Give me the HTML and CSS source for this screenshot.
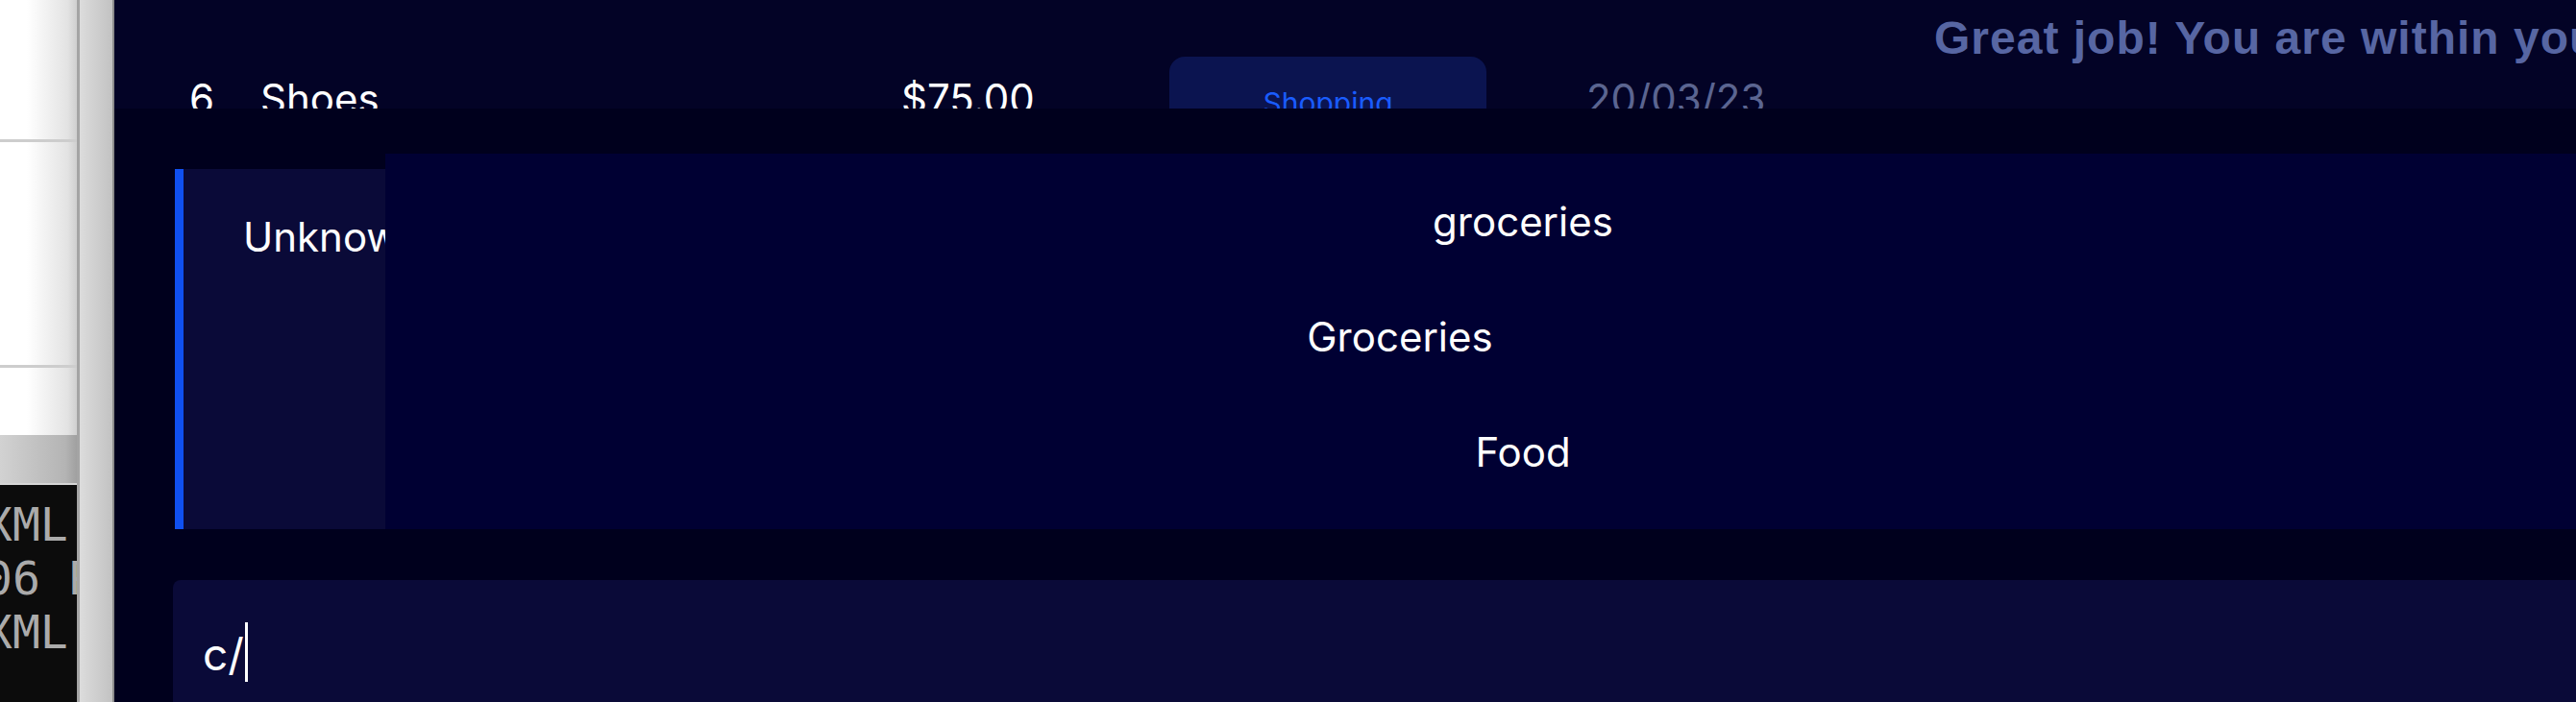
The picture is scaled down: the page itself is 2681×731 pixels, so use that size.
FILE: index.html
```html
<!DOCTYPE html>
<html lang="en">
<head>
    <meta charset="UTF-8">
    <meta name="viewport" content="width=device-width, initial-scale=1.0">
    <title>Expenses - Command</title>
    <link rel="stylesheet" href="styles.css">
</head>
<body>
    <div class="desktop">
        <aside class="side">
            <div class="side-list">
                <div class="side-row side-row-top"></div>
                <div class="side-row side-row-mid"></div>
                <div class="side-row side-row-end"></div>
            </div>
            <div class="side-bar"></div>
            <div class="term">
                <div class="term-line">XML</div>
                <div class="term-line">06 P</div>
                <div class="term-line">XML</div>
            </div>
        </aside>

        <div class="divider"></div>

        <main class="app">
            <div class="top">
                <div class="expense-row">
                    <span class="cell-id">6</span>
                    <span class="cell-name">Shoes</span>
                    <span class="cell-amount">$75.00</span>
                    <span class="cell-cat"><span class="badge">Shopping</span></span>
                    <span class="cell-date">20/03/23</span>
                </div>
                <p class="notice">Great job! You are within your budget.</p>
            </div>

            <div class="palette">
                <div class="results">
                    <div class="preview">
                        <span class="preview-name">Unknown</span>
                    </div>
                    <ul class="options">
                        <li class="option">groceries</li>
                        <li class="option option-shift">Groceries</li>
                        <li class="option">Food</li>
                    </ul>
                </div>
                <div class="prompt">
                    <span class="prompt-text">c/</span><span class="caret"></span>
                </div>
            </div>
        </main>
    </div>
</body>
</html>
```

FILE: styles.css
```css
/* CSS */
*, *:after, *:before {
    margin: 0;
    padding: 0;
    border: 0;
    box-sizing: border-box;
}

:root {
    --page: #030326;
    --shade: #00001d;
    --panel: #000033;
    --card: #0a0a38;
    --blue: #1050f0;
    --badge: #0b1450;
    --badge-text: #1a5cff;
    --muted: #5b6591;
    --notice: #5766a3;
    --white: #fff;
}

body {
    height: 731px;
    overflow: hidden;
    background: var(--shade);
    font-family: 'Inter', sans-serif;
    color: var(--white);
}

.desktop {
    display: flex;
    height: 100%;
}

/* window behind, on the left */
.side {
    flex: 0 0 80px;
    display: flex;
    flex-direction: column;
    overflow: hidden;
}

.side-list {
    flex: 0 0 453px;
    display: flex;
    flex-direction: column;
}

.side-row {
    background: linear-gradient(to right, #fff 35%, #e3e3e3 88%, #cfcfcf);
}

.side-row-top {
    height: 148px;
    border-bottom: 3px solid #cdcdcd;
}

.side-row-mid {
    height: 235px;
    border-bottom: 3px solid #cdcdcd;
}

.side-row-end {
    flex: 1;
}

.side-bar {
    flex: 0 0 52px;
    background: linear-gradient(to right, #d2d2d2, #b4b4b4 85%, #a0a0a0);
    border-bottom: 2px solid #d6d6d6;
}

.term {
    flex: 1;
    padding-top: 13px;
    background: #0c0c0c;
    font-family: 'DejaVu Sans Mono', monospace;
    font-size: 48px;
    line-height: 56px;
    color: #ababab;
    white-space: nowrap;
}

.term-line {
    margin-left: -16px;
}

.divider {
    flex: 0 0 39px;
    background: linear-gradient(to right, #dcdcdc, #c2c2c2);
    border-left: 3px solid #a4a4a4;
    border-right: 2px solid #8c8c8c;
}

/* app */
.app {
    flex: 1;
    min-width: 0;
    display: flex;
    flex-direction: column;
}

.top {
    flex: 0 0 113px;
    display: flex;
    overflow: hidden;
    background: var(--page);
}

.expense-row {
    flex: 0 0 1894px;
    display: grid;
    grid-template-columns: 74px 667px 279px 434px auto;
    align-items: baseline;
    padding: 59px 0 0 78px;
    font-size: 42px;
}

.cell-date {
    color: var(--muted);
}

.badge {
    display: block;
    width: 330px;
    padding: 30px 0;
    border-radius: 16px;
    background: var(--badge);
    color: var(--badge-text);
    font-size: 30px;
    text-align: center;
}

.notice {
    padding-top: 12px;
    font-family: 'Liberation Sans', Arial, sans-serif;
    font-weight: 700;
    font-size: 48px;
    letter-spacing: 1px;
    color: var(--notice);
    white-space: nowrap;
}

.palette {
    flex: 1;
    display: flex;
    flex-direction: column;
    padding: 47px 0 0 61px;
}

.results {
    flex: 0 0 391px;
    display: flex;
}

.preview {
    flex: 0 0 219px;
    margin: 16px 0 0 2px;
    padding: 11px 0 0 62px;
    border-left: 9px solid var(--blue);
    background: var(--card);
    overflow: hidden;
    white-space: nowrap;
    font-size: 42px;
    line-height: 120px;
}

.options {
    flex: 1;
    list-style: none;
    padding: 11px 0 0 88px;
    background: var(--panel);
    font-size: 42px;
    line-height: 120px;
    text-align: center;
}

.option-shift {
    padding-right: 256px;
}

.prompt {
    flex: 1;
    margin-top: 53px;
    padding: 44px 0 0 31px;
    border-radius: 8px 0 0 0;
    background: var(--card);
    font-size: 46px;
    white-space: nowrap;
}

.caret {
    display: inline-block;
    width: 3px;
    height: 62px;
    margin-left: 1px;
    vertical-align: -12px;
    background: var(--white);
}
```
